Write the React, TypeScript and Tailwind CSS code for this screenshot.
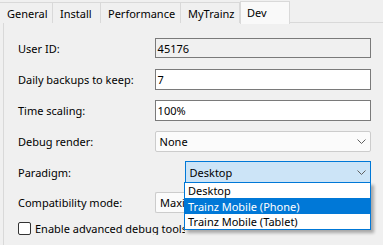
import React from 'react';

const Chevron = () => (
    <svg width="9" height="5" viewBox="0 0 9 5" className="shrink-0">
        <path d="M0.5 0.5 L4.5 4.5 L8.5 0.5" fill="none" stroke="#606060" strokeWidth="1" />
    </svg>
);

const tabs = ['General', 'Install', 'Performance', 'MyTrainz'];
const tabWidths = ['w-[53px]', 'w-[48px]', 'w-[80px]', 'w-[59px]'];

export default function App() {
    return (
        <div
            className="w-[383px] h-[245px] bg-[#f0f0f0] text-black text-[11px] leading-none overflow-hidden relative"
            style={{ fontFamily: '"Noto Sans", "Segoe UI", sans-serif' }}
        >
            {/* Tab strip */}
            <div className="flex h-[23px] items-end">
                {tabs.map((t, i) => (
                    <div
                        key={t}
                        className={`${tabWidths[i]} h-[21px] flex items-center pl-[7px] border-r border-t border-[#d9d9d9] bg-[#f0f0f0]`}
                    >
                        {t}
                    </div>
                ))}
                <div className="w-[50px] h-[23px] flex items-start pt-[5px] pl-[6px] bg-[#f9f9f9] border-x border-t border-[#d9d9d9] -mb-px relative z-10">
                    Dev
                </div>
                <div className="flex-1 h-px bg-[#d9d9d9]" />
            </div>

            {/* Panel */}
            <div className="border-l border-[#d9d9d9] ml-[3px] h-[222px] pl-[14px] pr-[12px] pt-[15px] flex flex-col">
                <div className="flex items-center h-[20px]">
                    <span className="w-[137px]">User ID:</span>
                    <div className="w-[217px] h-[20px] border border-[#7a7a7a] bg-[#f0f0f0] flex items-center pl-[2px]">45176</div>
                </div>
                <div className="flex items-center h-[21px] mt-[11px]">
                    <span className="w-[137px]">Daily backups to keep:</span>
                    <div className="w-[217px] h-[21px] border border-[#7a7a7a] bg-white flex items-center pl-[2px]">7</div>
                </div>
                <div className="flex items-center h-[21px] mt-[10px]">
                    <span className="w-[137px]">Time scaling:</span>
                    <div className="w-[217px] h-[21px] border border-[#7a7a7a] bg-white flex items-center pl-[2px]">100%</div>
                </div>
                <div className="flex items-center h-[21px] mt-[10px]">
                    <span className="w-[137px]">Debug render:</span>
                    <div className="w-[217px] h-[21px] border border-[#cccccc] rounded-[2px] bg-[#fbfbfb] flex items-center justify-between pl-[4px] pr-[4px]">
                        <span>None</span>
                        <Chevron />
                    </div>
                </div>
                <div className="flex items-center h-[22px] mt-[9px]">
                    <span className="w-[167px]">Paradigm:</span>
                    <div className="w-[187px] h-[22px] border border-[#0078d7] bg-[#cce4f7] flex items-center justify-between pl-[4px] pr-[4px]">
                        <span>Desktop</span>
                        <Chevron />
                    </div>
                </div>
                <div className="flex items-center h-[21px] mt-[9px]">
                    <span className="w-[137px]">Compatibility mode:</span>
                    {/* right part of this box is hidden under the open list */}
                    <div className="w-[30px] h-[21px] border-y border-l border-[#cccccc] rounded-l-[2px] bg-[#fbfbfb] flex items-center pl-[4px] overflow-hidden whitespace-nowrap">
                        <span>Maximum</span>
                    </div>
                </div>
                <div className="flex items-center mt-[9px] gap-[4px] w-[167px] overflow-hidden whitespace-nowrap">
                    <div className="w-[13px] h-[13px] shrink-0 border border-[#333333] bg-white rounded-[2px]" />
                    <span>Enable advanced debug tools</span>
                </div>
            </div>

            {/* Open dropdown list for Paradigm */}
            <div className="absolute left-[184px] top-[182px] w-[187px] border border-[#0078d7] bg-white shadow-[3px_3px_3px_rgba(0,0,0,0.3)] z-20 flex flex-col">
                <div className="h-[15px] flex items-center pl-[3px]">Desktop</div>
                <div className="h-[16px] flex items-center pl-[3px] bg-[#0078d7] text-white">Trainz Mobile (Phone)</div>
                <div className="h-[15px] flex items-center pl-[3px]">Trainz Mobile (Tablet)</div>
            </div>
        </div>
    );
}
